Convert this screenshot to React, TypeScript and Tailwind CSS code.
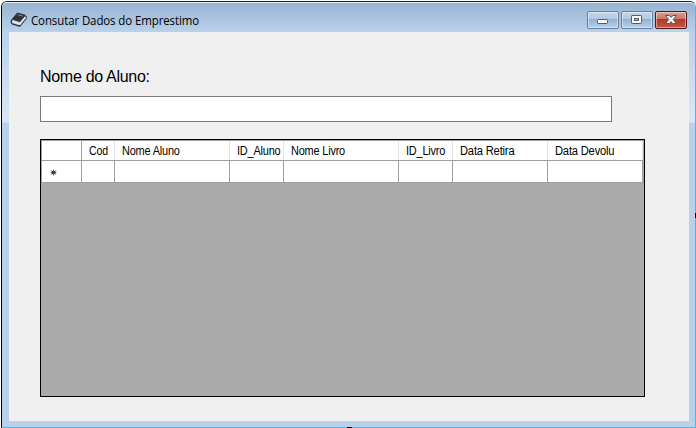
import React from "react";

const columns = [
  { label: "Cod", cell: "w-[33px]", text: "scale-x-[0.88]" },
  { label: "Nome Aluno", cell: "w-[115px]", text: "scale-x-[0.91]" },
  { label: "ID_Aluno", cell: "w-[54px]", text: "scale-x-[0.91]" },
  { label: "Nome Livro", cell: "w-[115px]", text: "scale-x-[0.91]" },
  { label: "ID_Livro", cell: "w-[54px]", text: "scale-x-[0.91]" },
  { label: "Data Retira", cell: "w-[95px]", text: "scale-x-[0.93]" },
  { label: "Data Devolu", cell: "w-[95px]", text: "scale-x-[0.93]" },
];

function BookIcon() {
  return (
    <svg width="17" height="16" viewBox="0 0 17 16" className="shrink-0">
      <path d="M7.4 1 15.3 3.2 10.2 9.6 2.2 7.2Z" fill="#303236" stroke="#303236" strokeLinejoin="round" />
      <path d="M2 7.5C.8 9 1 11.2 2.3 11.8L9.7 14.2 16 6.6V4" fill="none" stroke="#303236" strokeWidth="1.3" />
      <path d="M2.6 9.5 9.9 12 15.4 5.3" fill="none" stroke="#e7edf3" strokeWidth="1.7" />
      <path d="m8 2.8 4.8 1.3" stroke="#8996a4" strokeWidth="1" />
    </svg>
  );
}

function CaptionButton({ kind }: { kind: "min" | "max" | "close" }) {
  const close = kind === "close";
  return (
    <button
      aria-label={kind}
      className={`flex h-[18px] w-8 items-center justify-center rounded-[2px] border shadow-[inset_0_0_0_1px_rgba(255,255,255,0.45)] ${
        close
          ? "border-[#4b1720] bg-[linear-gradient(#dba092_0%,#cb7564_45%,#b43a27_46%,#c9573c_100%)]"
          : "border-[#667f9f] bg-[linear-gradient(#c3d7eb_0%,#b0c9e2_45%,#94b3d3_46%,#b5d0e9_100%)]"
      }`}
    >
      <svg width="14" height="12" viewBox="0 0 14 12">
        {kind === "min" && <rect x="1.5" y="5.5" width="10" height="4" rx=".7" fill="#fafafa" stroke="#555d6b" />}
        {kind === "max" && (
          <>
            <rect x="1.5" y="1.5" width="10" height="8" rx=".7" fill="#fafafa" stroke="#555d6b" />
            <rect x="4.5" y="4.5" width="4" height="2" fill="#9fb6cf" stroke="#555d6b" />
          </>
        )}
        {close && (
          <path
            d="M1.5 1.5h3.8L7 3.4l1.7-1.9h3.8L9.2 5.5l3.3 4H8.7L7 7.6 5.3 9.5H1.5l3.3-4Z"
            fill="#fafafa"
            stroke="#57535d"
          />
        )}
      </svg>
    </button>
  );
}

export default function App() {
  return (
    <div className="relative h-[428px] w-[696px] overflow-hidden bg-white pl-px pt-px">
      <div className="flex h-[427px] w-[695px] flex-col rounded-t-[6px] border border-b-[#38c4dc] border-l-black border-r-[#38c4dc] border-t-[#16222a] bg-[#b9d1ea]">
        <header className="flex h-[30px] shrink-0 items-start justify-between rounded-t-[5px] border-t border-[#e6f0f7] bg-[linear-gradient(#98b4d2,#b9d1ea)] pl-2 pr-2">
          <div className="flex pt-[9px]">
            <BookIcon />
            <h1 className="ml-1 origin-left scale-x-[0.955] whitespace-nowrap font-['Open_Sans',sans-serif] text-[12px] leading-[17px] tracking-[-0.1px] text-black">
              Consutar Dados do Emprestimo
            </h1>
          </div>
          <div className="flex gap-[2px] pt-2">
            <CaptionButton kind="min" />
            <CaptionButton kind="max" />
            <CaptionButton kind="close" />
          </div>
        </header>
        <div className="flex grow bg-[linear-gradient(#b9d1ea_0px,#dae7f5_90px,#b9d1ea_91px)] pb-[6px] pl-[7px] pr-[6px]">
          <main className="grow bg-[#f0f0f0] pl-[31px] pt-9">
            <label
              htmlFor="aluno"
              className="block h-7 whitespace-nowrap font-['Liberation_Sans',sans-serif] text-[16px] leading-[18px] tracking-[-0.3px] text-black"
            >
              Nome do Aluno:
            </label>
            <input id="aluno" className="block h-[26px] w-[572px] border border-[#7a7a7a] bg-white px-1 outline-none" />
            <div className="mt-[17px] h-[258px] w-[605px] border border-black bg-[#ababab]">
              <div className="flex h-[21px] w-[602px] border-b border-t border-b-[#a0a0a0] border-t-[#a0a0a0] bg-white">
                <div className="w-[41px] shrink-0 border-l border-r border-l-[#a0a0a0] border-r-[#a0a0a0]" />
                {columns.map((c) => (
                  <div
                    key={c.label}
                    className={`${c.cell} shrink-0 border-r border-[#e3e3e3] pl-[7px] font-['Liberation_Sans',sans-serif] text-[12px] leading-[20px] text-black`}
                  >
                    <span className={`${c.text} inline-block origin-left whitespace-nowrap tracking-[-0.2px]`}>{c.label}</span>
                  </div>
                ))}
              </div>
              <div className="flex h-[22px] w-[602px] border-b border-[#a0a0a0] bg-white">
                <div className="flex w-[41px] shrink-0 items-center border-l border-r border-l-[#a0a0a0] border-r-[#a0a0a0] pl-2 pt-px">
                  <svg width="7" height="7" viewBox="0 0 7 7">
                    <path d="M3.5.5v6M.8 1.5l5.4 4M.8 5.5l5.4-4M.5 3.5h6" stroke="#777" />
                    <circle cx="3.5" cy="3.5" r="2" fill="#444" />
                  </svg>
                </div>
                {columns.map((c) => (
                  <div key={c.label} className={`${c.cell} shrink-0 border-r border-[#a0a0a0]`} />
                ))}
              </div>
            </div>
          </main>
        </div>
      </div>
      <span className="absolute right-0 top-[213px] h-[5px] w-px bg-black" />
      <span className="absolute bottom-0 left-[347px] h-px w-[5px] bg-black" />
    </div>
  );
}
